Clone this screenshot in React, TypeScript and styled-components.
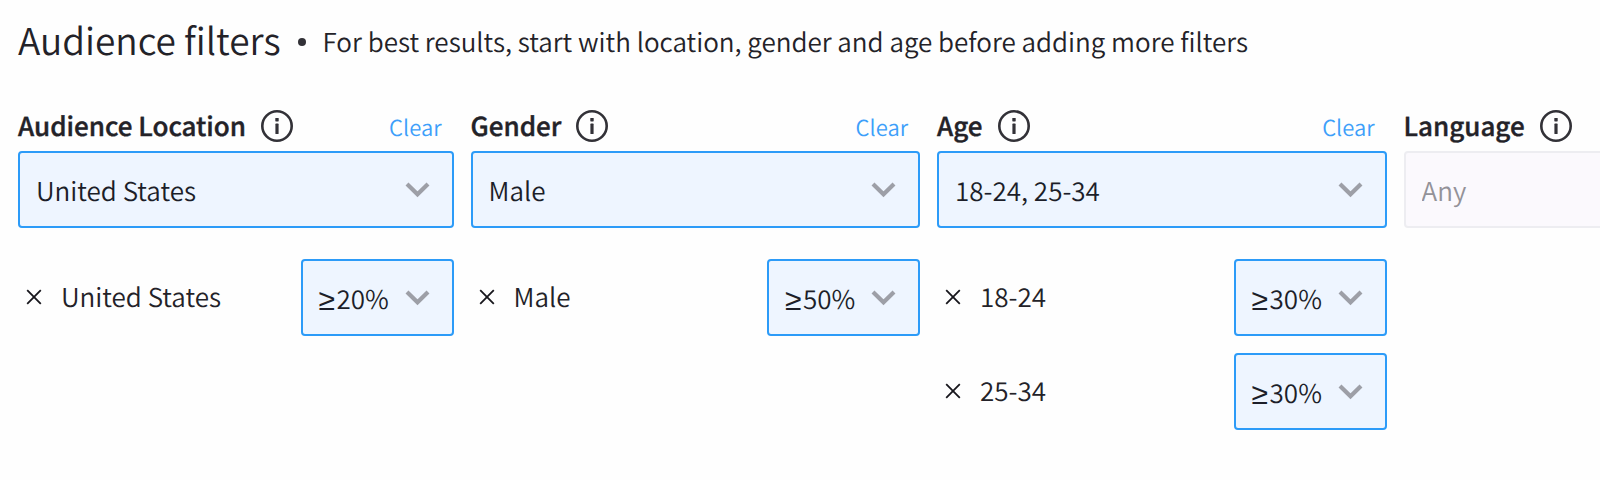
import React from "react";
import styled, { createGlobalStyle } from "styled-components";

const GlobalStyle = createGlobalStyle`
  *, *::before, *::after { box-sizing: border-box; }
  body {
    margin: 0;
    background: #fefefe;
    color: #232228;
    font-family: "Noto Sans CJK KR", "Noto Sans", sans-serif;
    font-size: 26px;
    font-weight: 350;
    line-height: 38px;
    text-rendering: geometricPrecision;
    overflow-x: hidden;
  }
  button, select { font: inherit; color: inherit; text-rendering: inherit; }
`;

const Panel = styled.main`
  padding: 14px 0 48px 18px;
  overflow: hidden;
`;

const Header = styled.header`
  display: flex;
  align-items: center;
  gap: 17px;
  margin-bottom: 40px;
`;

const Title = styled.h1`
  margin: 0;
  padding-bottom: 6px;
  font-size: 37px;
  font-weight: 350;
  line-height: 50px;
  white-space: nowrap;
`;

const Dot = styled.span`
  flex: none;
  width: 8px;
  height: 8px;
  border-radius: 50%;
  background: #323137;
`;

const Hint = styled.p`
  margin: 0;
  white-space: nowrap;
`;

const Filters = styled.div`
  display: grid;
  width: 116%;
  grid-template-columns: 436fr 450fr 450fr 450fr;
  column-gap: 17px;
  align-items: start;
`;

const Column = styled.section`
  min-width: 0;
`;

const LabelRow = styled.div`
  display: flex;
  align-items: center;
  height: 32px;
  margin-bottom: 9px;
  padding-right: 12px;
`;

const Label = styled.label`
  font-weight: 500;
  -webkit-text-stroke: 0.4px currentColor;
  white-space: nowrap;
`;

const InfoButton = styled.button`
  display: flex;
  margin-left: 15px;
  padding: 0;
  border: 0;
  background: none;
  color: #323137;
  cursor: pointer;
`;

const ClearButton = styled.button`
  margin-left: auto;
  padding: 2px 0 0;
  border: 0;
  background: none;
  color: #3d9ffa;
  font-size: 22px;
  line-height: 32px;
  cursor: pointer;
`;

const SelectBox = styled.div<{ $small?: boolean }>`
  display: grid;
  flex: none;
  align-items: center;
  width: ${(p) => (p.$small ? "153px" : "100%")};
  > * { grid-area: 1 / 1; }
  > svg { justify-self: end; margin: 0 24px 0 0; pointer-events: none; }
`;

const Select = styled.select<{ $active: boolean; $prefixed?: boolean }>`
  appearance: none;
  width: 100%;
  height: 77px;
  padding: 2px 48px 0 ${(p) => (p.$prefixed ? "34px" : "16px")};
  border: 2px solid ${(p) => (p.$active ? "#2c9bf8" : "#ededf1")};
  border-radius: 4px;
  background: ${(p) => (p.$active ? "#eef5ff" : "#fbf9fd")};
  color: ${(p) => (p.$active ? "#1c1e29" : "#939298")};
  cursor: pointer;
`;

const AtLeast = styled.span`
  justify-self: start;
  padding: 2px 0 0 18px;
  color: #1c1e29;
  font-family: "Noto Sans", sans-serif;
  font-size: 30px;
  font-weight: 300;
  pointer-events: none;
  z-index: 1;
`;

const Rows = styled.ul`
  display: grid;
  gap: 17px;
  margin: 31px 0 0;
  padding: 0;
  list-style: none;
`;

const Row = styled.li`
  display: flex;
  align-items: center;
  justify-content: space-between;
`;

const Picked = styled.div`
  display: flex;
  align-items: center;
  gap: 19px;
  padding: 0 0 2px 8px;
`;

const RemoveButton = styled.button`
  display: flex;
  padding: 0;
  border: 0;
  background: none;
  cursor: pointer;
`;

const InfoIcon = () => (
  <svg width="32" height="32" viewBox="0 0 32 32" fill="none" aria-hidden="true">
    <circle cx="16" cy="16" r="14.7" stroke="currentColor" strokeWidth="2.6" />
    <rect x="14.3" y="8" width="3.4" height="3.4" rx="0.6" fill="currentColor" />
    <rect x="14.4" y="13.6" width="3.2" height="10.4" rx="0.6" fill="currentColor" />
  </svg>
);

const Chevron = () => (
  <svg width="25" height="16" viewBox="0 0 25 16" fill="none" aria-hidden="true">
    <path d="M2 2L12.5 12.2L23 2" stroke="#9d9fa7" strokeWidth="4.2" />
  </svg>
);

const Cross = () => (
  <svg width="16" height="16" viewBox="0 0 16 16" fill="none" aria-hidden="true">
    <path d="M1.2 1.2L14.8 14.8M14.8 1.2L1.2 14.8" stroke="#17161c" strokeWidth="1.8" />
  </svg>
);

type Filter = {
  id: string;
  label: string;
  value: string;
  active: boolean;
  picked: { name: string; share: string }[];
};

const filters: Filter[] = [
  { id: "location", label: "Audience Location", value: "United States", active: true, picked: [{ name: "United States", share: "20%" }] },
  { id: "gender", label: "Gender", value: "Male", active: true, picked: [{ name: "Male", share: "50%" }] },
  { id: "age", label: "Age", value: "18-24, 25-34", active: true, picked: [{ name: "18-24", share: "30%" }, { name: "25-34", share: "30%" }] },
  { id: "language", label: "Language", value: "Any", active: false, picked: [] },
];

export default function App() {
  return (
    <>
      <GlobalStyle />
      <Panel>
        <Header>
          <Title>Audience filters</Title>
          <Dot />
          <Hint>For best results, start with location, gender and age before adding more filters</Hint>
        </Header>
        <Filters>
          {filters.map((f) => (
            <Column key={f.id}>
              <LabelRow>
                <Label htmlFor={f.id}>{f.label}</Label>
                <InfoButton type="button" aria-label={`About ${f.label}`}>
                  <InfoIcon />
                </InfoButton>
                {f.active && <ClearButton type="button">Clear</ClearButton>}
              </LabelRow>
              <SelectBox>
                <Select id={f.id} $active={f.active}>
                  <option>{f.value}</option>
                </Select>
                <Chevron />
              </SelectBox>
              {f.picked.length > 0 && (
                <Rows>
                  {f.picked.map((p) => (
                    <Row key={p.name}>
                      <Picked>
                        <RemoveButton type="button" aria-label={`Remove ${p.name}`}>
                          <Cross />
                        </RemoveButton>
                        <span>{p.name}</span>
                      </Picked>
                      <SelectBox $small>
                        <AtLeast>≥</AtLeast>
                        <Select $active $prefixed aria-label={`${p.name} minimum share`}>
                          <option>{p.share}</option>
                        </Select>
                        <Chevron />
                      </SelectBox>
                    </Row>
                  ))}
                </Rows>
              )}
            </Column>
          ))}
        </Filters>
      </Panel>
    </>
  );
}
